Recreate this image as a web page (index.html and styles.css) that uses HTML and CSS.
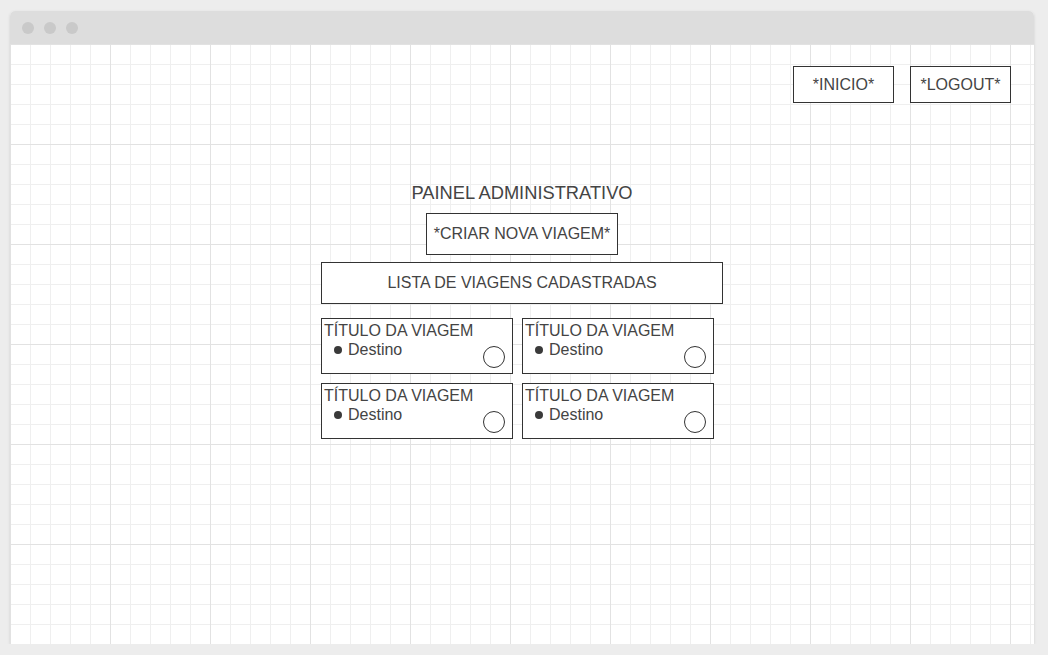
FILE: index.html
```html
<!DOCTYPE html>
<html lang="pt">
<head>
<meta charset="utf-8">
<title>Painel Administrativo</title>
<link rel="stylesheet" href="styles.css">
</head>
<body>
<div class="window">
  <div class="titlebar">
    <span class="dot"></span><span class="dot"></span><span class="dot"></span>
  </div>
  <div class="canvas">
    <div class="topnav">
      <div class="btn nav-btn">*INICIO*</div>
      <div class="btn nav-btn">*LOGOUT*</div>
    </div>
    <main class="panel">
      <h1 class="panel-title">PAINEL ADMINISTRATIVO</h1>
      <div class="btn create-btn">*CRIAR NOVA VIAGEM*</div>
      <div class="list-head">LISTA DE VIAGENS CADASTRADAS</div>
      <div class="cards">
        <div class="card">
          <div class="card-text">
            <div class="card-title">TÍTULO DA VIAGEM</div>
            <div class="card-dest"><span class="bullet"></span>Destino</div>
          </div>
          <span class="circle"></span>
        </div>
        <div class="card">
          <div class="card-text">
            <div class="card-title">TÍTULO DA VIAGEM</div>
            <div class="card-dest"><span class="bullet"></span>Destino</div>
          </div>
          <span class="circle"></span>
        </div>
        <div class="card">
          <div class="card-text">
            <div class="card-title">TÍTULO DA VIAGEM</div>
            <div class="card-dest"><span class="bullet"></span>Destino</div>
          </div>
          <span class="circle"></span>
        </div>
        <div class="card">
          <div class="card-text">
            <div class="card-title">TÍTULO DA VIAGEM</div>
            <div class="card-dest"><span class="bullet"></span>Destino</div>
          </div>
          <span class="circle"></span>
        </div>
      </div>
    </main>
  </div>
</div>
</body>
</html>
```
FILE: styles.css
```css
* { box-sizing: border-box; }
html, body { margin: 0; padding: 0; }
body {
  background: #ededed;
  padding: 11px 0 0 10px;
  font-family: "Liberation Sans", Arial, sans-serif;
  color: #444;
}
.window {
  width: 1024px;
  height: 633px;
  background: #fff;
  border-radius: 5px 5px 0 0;
  box-shadow: 0 1px 3px rgba(0,0,0,0.12);
  display: flex;
  flex-direction: column;
  overflow: hidden;
}
.titlebar {
  height: 33px;
  background: #dddddd;
  display: flex;
  align-items: center;
  gap: 10px;
  padding-left: 12px;
  flex: none;
}
.dot {
  width: 12px;
  height: 12px;
  border-radius: 50%;
  background: #c9c9c9;
}
.canvas {
  flex: 1;
  background-color: #fff;
  background-image:
    linear-gradient(to right, #e2e2e2 1px, transparent 1px),
    linear-gradient(to bottom, #e2e2e2 1px, transparent 1px),
    linear-gradient(to right, #efefef 1px, transparent 1px),
    linear-gradient(to bottom, #efefef 1px, transparent 1px);
  background-size: 100px 100px, 100px 100px, 20px 20px, 20px 20px;
  display: flex;
  flex-direction: column;
}
.topnav {
  display: flex;
  justify-content: flex-end;
  gap: 16px;
  padding: 22px 23px 0 0;
}
.btn {
  border: 1px solid #333;
  background: #fff;
  display: flex;
  align-items: center;
  justify-content: center;
  font-size: 16px;
  color: #444;
}
.nav-btn {
  width: 101px;
  height: 37px;
}
.panel {
  display: flex;
  flex-direction: column;
  align-items: center;
  margin-top: 80px;
}
.panel-title {
  margin: 0;
  font-weight: normal;
  font-size: 18.3px;
  line-height: 20px;
  color: #444;
}
.create-btn {
  margin-top: 10px;
  width: 192px;
  height: 42px;
}
.list-head {
  margin-top: 7px;
  width: 402px;
  height: 42px;
  border: 1px solid #333;
  background: #fff;
  display: flex;
  align-items: center;
  justify-content: center;
  font-size: 16px;
}
.cards {
  margin-top: 14px;
  width: 402px;
  display: grid;
  grid-template-columns: 192px 192px;
  column-gap: 9px;
  row-gap: 9px;
}
.card {
  height: 56px;
  border: 1px solid #333;
  background: #fff;
  display: flex;
  justify-content: space-between;
  padding: 2px 7px 5px 2px;
}
.card-text {
  font-size: 16px;
  line-height: 19px;
}
.card-dest {
  padding-left: 10px;
}
.bullet {
  display: inline-block;
  width: 8px;
  height: 8px;
  border-radius: 50%;
  background: #3a3a3a;
  margin-right: 6px;
  vertical-align: 1px;
}
.circle {
  align-self: flex-end;
  width: 22px;
  height: 22px;
  border: 1px solid #333;
  border-radius: 50%;
}
```
